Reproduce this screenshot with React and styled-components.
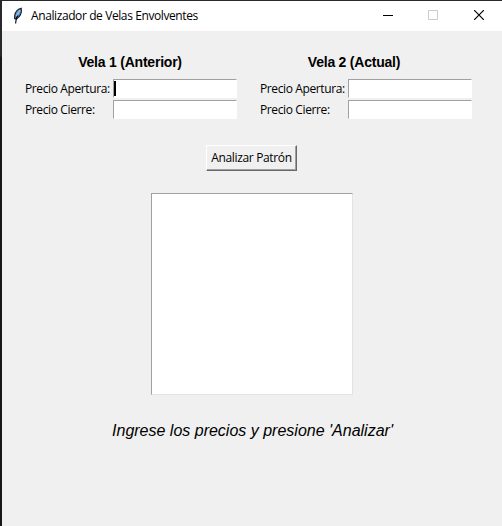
import React from 'react';
import styled, { createGlobalStyle } from 'styled-components';

const GlobalStyle = createGlobalStyle`
  * { box-sizing: border-box; }
  body { margin: 0; overflow: hidden; background: #1b1b1e; }
`;

const Desktop = styled.div`
  width: 502px;
  height: 526px;
  padding: 1px 0 0 2px;
  background: linear-gradient(#29292c 0, #29292c 56px, #17171a 57px);
`;

const Window = styled.main`
  display: flex;
  flex-direction: column;
  height: 525px;
  background: #f0f0f0;
  color: #000;
  font-family: 'Open Sans', 'Noto Sans', sans-serif;
  font-size: 12px;
`;

const TitleBar = styled.header`
  display: flex;
  align-items: center;
  height: 30px;
  padding-left: 8px;
  background: #fff;
`;

const Title = styled.h1`
  flex: 1;
  margin: 0 0 0 5px;
  font-size: 12px;
  font-weight: 400;
  line-height: 16px;
  letter-spacing: -0.4px;
  white-space: nowrap;
`;

const WindowButton = styled.button`
  display: grid;
  place-items: center;
  width: ${(p) => p.$width}px;
  height: 30px;
  padding: 0 0 2px;
  border: 0;
  background: transparent;
  color: ${(p) => (p.disabled ? '#ccc' : '#000')};
  svg { display: block; }
`;

const Forms = styled.section`
  display: flex;
  gap: 23px;
  padding: 22px 0 0 23px;
`;

const Candle = styled.fieldset`
  width: 212px;
  margin: 0;
  padding: 0;
  border: 0;
`;

const CandleTitle = styled.h2`
  height: 26px;
  margin: 0;
  padding-right: ${(p) => p.$inset}px;
  font: 700 14px/18px 'Liberation Sans', Arial, sans-serif;
  letter-spacing: -0.22px;
  text-align: center;
`;

const Field = styled.label`
  display: flex;
  justify-content: space-between;
  align-items: center;
  height: 19px;
  margin-bottom: 2px;
`;

const FieldName = styled.span`
  line-height: 19px;
  letter-spacing: -0.38px;
  white-space: nowrap;
`;

const Entry = styled.span`
  width: 124px;
  height: 19px;
  padding: 1px 0 0;
  border: 1px solid;
  border-color: #a0a0a0 #fff #fff #a0a0a0;
  background: #fff;
`;

const Caret = styled.span`
  display: block;
  width: 2px;
  height: 15px;
  background: #000;
`;

const AnalyzeButton = styled.button`
  width: 91px;
  height: 26px;
  margin: 24px 0 0 204px;
  padding: 0;
  border: 1px solid;
  border-color: #fff #696969 #696969 #fff;
  box-shadow: inset -1px -1px #a0a0a0;
  background: #f0f0f0;
  color: #000;
  font: inherit;
  line-height: 22px;
  letter-spacing: -0.35px;
  white-space: nowrap;
`;

const Chart = styled.div`
  width: 202px;
  height: 202px;
  margin: 22px 0 0 149px;
  border: 1px solid;
  border-color: #a0a0a0 #e3e3e3 #e3e3e3 #a0a0a0;
  background: #fff;
`;

const Message = styled.p`
  margin: 27px 0 0;
  padding-left: 1px;
  font: italic 16px/18px 'Liberation Sans', Arial, sans-serif;
  text-align: center;
`;

const Feather = () => (
  <svg width="16" height="18" viewBox="0 0 16 18">
    <path d="M11.2 1.2C7.8 2 5.2 5 4.7 8.6L4.6 11.6L6.2 12.2C9.6 10.2 12 6 11.2 1.2Z" fill="#5790cc" stroke="#15191f" strokeWidth="1.1" />
    <path d="M10 3.2L6.3 9.2" stroke="#8fc0ee" strokeWidth="1.6" />
    <path d="M8 8.5L6.4 11L5.6 16.5" fill="none" stroke="#000" strokeWidth="1.1" />
  </svg>
);

const CandleForm = ({ title, inset, active }) => (
  <Candle>
    <CandleTitle $inset={inset}>{title}</CandleTitle>
    <Field>
      <FieldName>Precio Apertura:</FieldName>
      <Entry>{active && <Caret />}</Entry>
    </Field>
    <Field>
      <FieldName>Precio Cierre:</FieldName>
      <Entry />
    </Field>
  </Candle>
);

export default function App() {
  return (
    <Desktop>
      <GlobalStyle />
      <Window>
        <TitleBar>
          <Feather />
          <Title>Analizador de Velas Envolventes</Title>
          <WindowButton $width={44} aria-label="Minimizar">
            <svg width="10" height="10"><path d="M0 5.5H10" stroke="currentColor" /></svg>
          </WindowButton>
          <WindowButton $width={46} aria-label="Maximizar" disabled>
            <svg width="10" height="10"><path d="M.5 .5H9.5V9.5H.5Z" fill="none" stroke="currentColor" /></svg>
          </WindowButton>
          <WindowButton $width={46} aria-label="Cerrar">
            <svg width="10" height="10"><path d="M0 0L10 10M10 0L0 10" stroke="currentColor" strokeWidth="1.2" /></svg>
          </WindowButton>
        </TitleBar>
        <Forms>
          <CandleForm title="Vela 1 (Anterior)" inset={2} active />
          <CandleForm title="Vela 2 (Actual)" inset={24} />
        </Forms>
        <AnalyzeButton>Analizar Patrón</AnalyzeButton>
        <Chart />
        <Message>Ingrese los precios y presione 'Analizar'</Message>
      </Window>
    </Desktop>
  );
}
